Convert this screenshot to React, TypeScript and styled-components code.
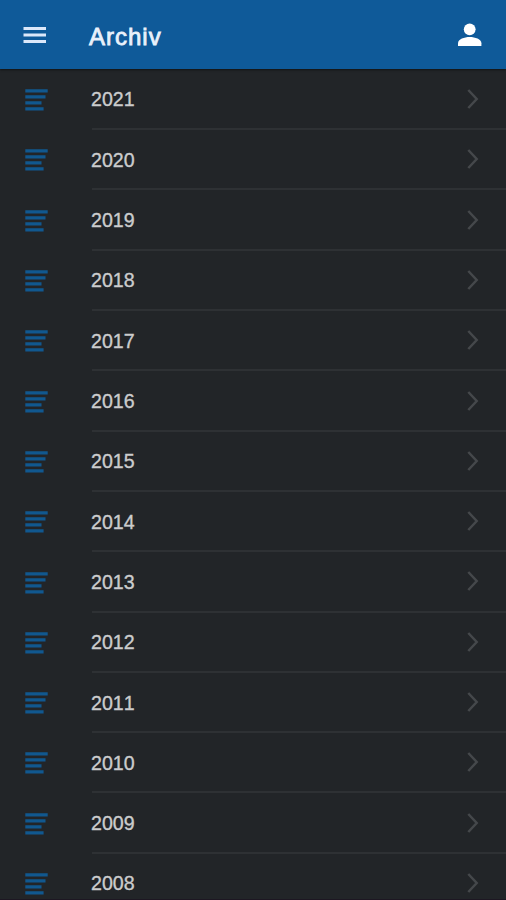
import React from "react";
import styled, { createGlobalStyle } from "styled-components";

const GlobalStyle = createGlobalStyle`
  * { box-sizing: border-box; }
  body {
    margin: 0;
    background: #222528;
    font-family: "Liberation Sans", Arial, sans-serif;
  }
`;

const Screen = styled.div`
  display: flex;
  flex-direction: column;
  height: 900px;
  overflow: hidden;
  background: #222528;
  border-bottom: 1px solid #1d1722;
`;

const Header = styled.header`
  display: flex;
  align-items: center;
  flex: none;
  height: 69px;
  padding: 1px 24px 0 23px;
  background: #0f5a99;
  box-shadow: 0 1px 2px rgba(0, 0, 0, 0.5);
  z-index: 1;
`;

const IconButton = styled.button`
  display: flex;
  flex: none;
  padding: 0;
  border: 0;
  background: none;
`;

const Title = styled.h1`
  flex: 1;
  margin: 3px 0 0 42px;
  color: #e9f1fb;
  font-size: 24px;
  line-height: 30px;
  font-weight: 400;
  letter-spacing: 1px;
  -webkit-text-stroke: 0.8px #e9f1fb;
`;

const List = styled.ul`
  flex: none;
  margin: 0;
  padding: 0;
  list-style: none;
`;

const Row = styled.li`
  display: flex;
  height: 60.31px;
  padding-left: 25px;

  &:first-child {
    height: 61.2px;
  }
`;

const RowIcon = styled.svg`
  flex: none;
  align-self: flex-end;
  margin: 0 44px 19px 0;
`;

const RowBody = styled.div`
  display: flex;
  flex: 1;
  align-items: center;
  justify-content: space-between;
  padding-right: 27px;
  border-bottom: 2px solid #2e3134;
`;

const Year = styled.span`
  margin: 1px 0 0 -1px;
  color: #cbcccd;
  font-size: 19.6px;
  line-height: 24px;
  font-kerning: none;
  -webkit-text-stroke: 0.35px #cbcccd;
`;

const years = Array.from({ length: 14 }, (_, i) => 2021 - i);

export default function App() {
  return (
    <>
      <GlobalStyle />
      <Screen>
        <Header>
          <IconButton aria-label="Menu">
            <svg width="24" height="18" viewBox="0 0 24 18">
              <path d="M0.5 2.5H23M0.5 9H23M0.5 15.5H23" stroke="#dce8fa" strokeWidth="2.9" />
            </svg>
          </IconButton>
          <Title>Archiv</Title>
          <IconButton aria-label="Profil">
            <svg width="25" height="24" viewBox="0 0 25 24">
              <circle cx="12.7" cy="6.3" r="5.9" fill="#fff" />
              <path d="M1 23V20.2C1 16.2 7.3 14.1 12.7 14.1S24.4 16.2 24.4 20.2V23Z" fill="#fff" />
            </svg>
          </IconButton>
        </Header>
        <List>
          {years.map((year) => (
            <Row key={year}>
              <RowIcon width="23" height="22" viewBox="0 0 23 22">
                <path
                  d="M0.3 1.8H22.7M0.3 7.8H20.5M0.3 13.8H16.5M0.3 19.8H18.6"
                  stroke="#11588f"
                  strokeWidth="3.3"
                />
              </RowIcon>
              <RowBody>
                <Year>{year}</Year>
                <svg width="13" height="20" viewBox="0 0 13 20" fill="none">
                  <path d="M2.3 1L10.7 10L2.3 19" stroke="#45484b" strokeWidth="2.5" />
                </svg>
              </RowBody>
            </Row>
          ))}
        </List>
      </Screen>
    </>
  );
}
